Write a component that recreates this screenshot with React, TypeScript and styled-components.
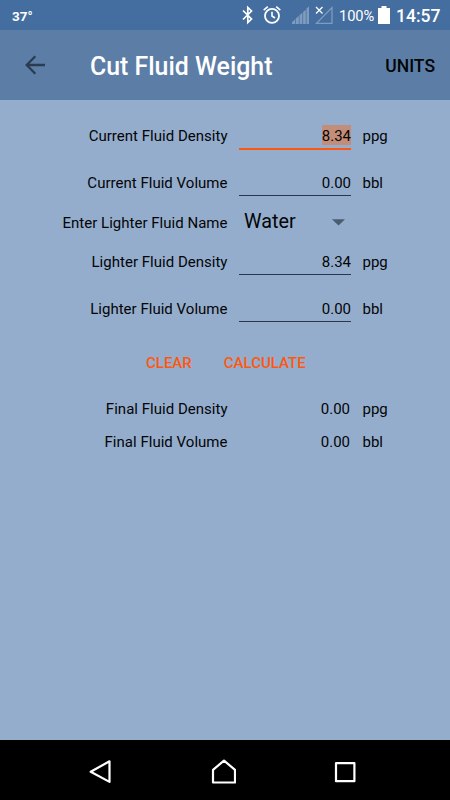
import React from 'react';
import styled, { createGlobalStyle } from 'styled-components';

const GlobalStyle = createGlobalStyle`
  * { box-sizing: border-box; }
  body { margin: 0; background: #95adcc; }
`;

const Screen = styled.div`
  display: flex;
  flex-direction: column;
  width: 450px;
  height: 800px;
  overflow: hidden;
  background: #95adcc;
  color: #030507;
  font: 15px/18px Roboto, sans-serif;
`;

const StatusBar = styled.header`
  display: flex;
  flex: none;
  align-items: center;
  justify-content: space-between;
  height: 30px;
  padding: 0 11px 0 12px;
  background: #446e9f;
  color: #fff;
`;

const Temperature = styled.span`
  margin-top: 1px;
  font-size: 13.5px;
  font-weight: 700;
`;

const StatusIcons = styled.div`
  display: flex;
  align-items: center;
  svg { display: block; flex: none; }
`;

const Percent = styled.span`
  width: 36px;
  margin: 1px 3px 0 6px;
  font-size: 14.7px;
  letter-spacing: -0.1px;
  white-space: nowrap;
`;

const Clock = styled.span`
  width: 43px;
  margin: 1px 0 0 6px;
  font-size: 17.5px;
  font-weight: 500;
  white-space: nowrap;
`;

const AppBar = styled.div`
  display: flex;
  flex: none;
  align-items: center;
  height: 70px;
  padding: 0 15px 0 25px;
  background: #5c7da6;
`;

const IconButton = styled.button`
  display: flex;
  padding: 0;
  border: 0;
  background: none;
`;

const Title = styled.h1`
  flex: 1;
  margin: 3px 0 0 45px;
  color: #fff;
  font-size: 24.9px;
  line-height: 30px;
  font-weight: 500;
`;

const UnitsButton = styled.button`
  padding: 0;
  margin-top: 1px;
  border: 0;
  background: none;
  color: #030507;
  font: 500 17.5px/20px Roboto, sans-serif;
`;

const Form = styled.main`
  flex: 1;
  padding-top: 16px;
`;

const Row = styled.div<{ $height: number }>`
  display: grid;
  grid-template-columns: 227.5px 112px 1fr;
  column-gap: 11.5px;
  align-items: center;
  height: ${(p) => p.$height}px;
`;

const Label = styled.label<{ $raised?: boolean }>`
  margin-bottom: ${(p) => (p.$raised ? 2 : 0)}px;
  text-align: right;
  letter-spacing: 0.02px;
`;

const Field = styled.div<{ $active?: boolean }>`
  height: ${(p) => (p.$active ? 28 : 26)}px;
  padding-top: ${(p) => (p.$active ? 3 : 2)}px;
  border-bottom: ${(p) => (p.$active ? '2px solid #ff570d' : '1px solid #27394b')};
  text-align: right;
`;

const Value = styled.span<{ $selected?: boolean }>`
  display: inline-block;
  height: 20px;
  line-height: 22px;
  background: ${(p) => (p.$selected ? '#c38e79' : 'transparent')};
`;

const Result = styled.span`
  padding-right: 1px;
  text-align: right;
`;

const Picker = styled.div`
  display: flex;
  align-items: center;
  justify-content: space-between;
  padding: 0 6px 3px 5px;
  font-size: 19.8px;
  line-height: 24px;
`;

const Actions = styled.div`
  display: flex;
  align-items: center;
  gap: 32px;
  height: 66px;
  padding-left: 146px;
`;

const Action = styled.button`
  padding: 0;
  border: 0;
  background: none;
  color: #ff570d;
  font: 500 15px/18px Roboto, sans-serif;
`;

const NavBar = styled.nav`
  display: flex;
  flex: none;
  align-items: center;
  justify-content: space-between;
  height: 60px;
  padding: 4px 92px 0 86px;
  background: #000;
`;

function Entry(p: { label: string; value: string; unit: string; height: number; active?: boolean }) {
  return (
    <Row $height={p.height}>
      <Label>{p.label}</Label>
      <Field $active={p.active}><Value $selected={p.active}>{p.value}</Value></Field>
      <span>{p.unit}</span>
    </Row>
  );
}

function Outcome(p: { label: string; value: string; unit: string; height: number }) {
  return (
    <Row $height={p.height}>
      <Label>{p.label}</Label>
      <Result>{p.value}</Result>
      <span>{p.unit}</span>
    </Row>
  );
}

function StatusGlyphs() {
  return (
    <svg width="92" height="30" viewBox="0 0 92 30" fill="none">
      <path d="M2 10.5 10.5 19 6.8 22.5V7.5l3.7 3.5L2 19.5" stroke="#fff" strokeWidth="1.7" />
      <circle cx="31" cy="15.9" r="7" stroke="#fff" strokeWidth="1.8" />
      <path d="M31 11.8V16L34 18M22.7 10.2 26.8 6.7M39.3 10.2 35.2 6.7" stroke="#fff" strokeWidth="1.6" />
      <g fill="#7f9cbe">
        <path d="M51 24v-1.8l3-2.6V24zM54.7 24v-5.4l3.1-2.5V24zM58.5 24v-8.8l2.9-2.4V24zM62.1 24V12l2.7-2.3V24zM65.5 24V8.5l2.5-2V24z" />
      </g>
      <path d="M75.5 23.3H91V7.5z" stroke="#7f9cbe" strokeWidth="1.3" />
      <path d="m75 7 6.5 6.5M81.5 7 75 13.5" stroke="#fff" strokeWidth="1.3" />
    </svg>
  );
}

export default function App() {
  return (
    <Screen>
      <GlobalStyle />
      <StatusBar>
        <Temperature>37°</Temperature>
        <StatusIcons>
          <StatusGlyphs />
          <Percent>100%</Percent>
          <svg width="12" height="18" viewBox="0 0 12 18">
            <path d="M3.5 0h5v2H12v16H0V2h3.5z" fill="#fff" />
          </svg>
          <Clock>14:57</Clock>
        </StatusIcons>
      </StatusBar>
      <AppBar>
        <IconButton aria-label="Back">
          <svg width="20" height="20" viewBox="0 0 20 20" fill="none" stroke="#293d52" strokeWidth="2.3">
            <path d="M20 10H2.5M10.3 1.2 1.7 10l8.6 8.8" />
          </svg>
        </IconButton>
        <Title>Cut Fluid Weight</Title>
        <UnitsButton>UNITS</UnitsButton>
      </AppBar>
      <Form>
        <Entry label="Current Fluid Density" value="8.34" unit="ppg" height={40} active />
        <Entry label="Current Fluid Volume" value="0.00" unit="bbl" height={54} />
        <Row $height={26}>
          <Label $raised>Enter Lighter Fluid Name</Label>
          <Picker>
            Water
            <svg width="13" height="7" viewBox="0 0 13 7"><path d="M0 .3h13L6.5 6.6z" fill="#4a5c70" /></svg>
          </Picker>
        </Row>
        <Entry label="Lighter Fluid Density" value="8.34" unit="ppg" height={52} />
        <Entry label="Lighter Fluid Volume" value="0.00" unit="bbl" height={42} />
        <Actions>
          <Action>CLEAR</Action>
          <Action>CALCULATE</Action>
        </Actions>
        <Outcome label="Final Fluid Density" value="0.00" unit="ppg" height={26} />
        <Outcome label="Final Fluid Volume" value="0.00" unit="bbl" height={40} />
      </Form>
      <NavBar>
        <svg width="28" height="26" viewBox="0 0 28 26" fill="none" stroke="#fff" strokeWidth="2.2" strokeLinejoin="round">
          <path d="M23.5 2.3v20.6L4.7 12.8z" />
        </svg>
        <svg width="26" height="26" viewBox="0 0 26 26" fill="none" stroke="#fff" strokeWidth="2.2" strokeLinejoin="round">
          <path d="M3 23.5V10.8L14 1.6l11 9.2v12.7z" />
        </svg>
        <svg width="26" height="26" viewBox="0 0 26 26" fill="none" stroke="#fff" strokeWidth="2.2" strokeLinejoin="round">
          <path d="M4 4.2h18.4v18H4z" />
        </svg>
      </NavBar>
    </Screen>
  );
}
